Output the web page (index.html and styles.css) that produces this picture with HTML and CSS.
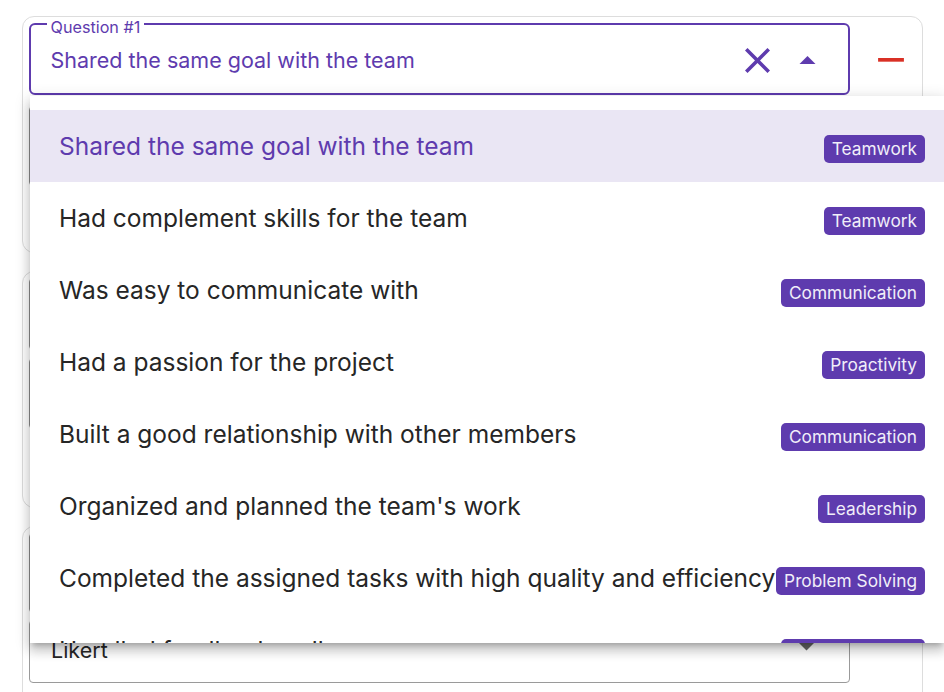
FILE: index.html
```html
<!DOCTYPE html>
<html lang="en">
<head>
<meta charset="utf-8">
<title>Questions</title>
<link rel="stylesheet" href="styles.css">
</head>
<body>
<div class="page">
  <div class="card">
    <div class="fields">
      <div class="qfield focused">
        <span class="qlabel">Question #1</span>
        <span class="qvalue">Shared the same goal with the team</span>
        <svg class="ico-close" viewBox="5 5 14 14" width="25" height="25"><path d="M19 6.41 17.59 5 12 10.59 6.41 5 5 6.41 10.59 12 5 17.59 6.41 19 12 13.41 17.59 19 19 17.59 13.41 12z"/></svg>
        <svg class="ico-arrow" viewBox="7 9 10 5" width="17" height="8.5"><path d="M7 14l5-5 5 5z"/></svg>
      </div>
      <div class="field f-c1b"></div>
    </div>
    <div class="actions">
      <svg class="ico-remove" viewBox="5 11 14 2" width="26" height="3.7"><path d="M19 13H5v-2h14v2z"/></svg>
    </div>
  </div>

  <div class="card">
    <div class="fields">
      <div class="field f-c2a"></div>
      <div class="field f-c2b"></div>
    </div>
    <div class="actions">
      <svg class="ico-remove" viewBox="5 11 14 2" width="26" height="3.7"><path d="M19 13H5v-2h14v2z"/></svg>
    </div>
  </div>

  <div class="card">
    <div class="fields">
      <div class="field f-c3a"></div>
      <div class="field select">
        <span class="svalue">Likert</span>
        <svg class="ico-down" viewBox="7 10 10 5" width="17" height="8.5"><path d="M7 10l5 5 5-5z"/></svg>
      </div>
    </div>
    <div class="actions">
      <svg class="ico-remove" viewBox="5 11 14 2" width="26" height="3.7"><path d="M19 13H5v-2h14v2z"/></svg>
    </div>
  </div>
</div>

<ul class="menu">
  <li class="item active"><span class="itext">Shared the same goal with the team</span><span class="chip">Teamwork</span></li>
  <li class="item"><span class="itext">Had complement skills for the team</span><span class="chip">Teamwork</span></li>
  <li class="item"><span class="itext">Was easy to communicate with</span><span class="chip">Communication</span></li>
  <li class="item"><span class="itext">Had a passion for the project</span><span class="chip">Proactivity</span></li>
  <li class="item"><span class="itext">Built a good relationship with other members</span><span class="chip">Communication</span></li>
  <li class="item"><span class="itext">Organized and planned the team's work</span><span class="chip">Leadership</span></li>
  <li class="item"><span class="itext">Completed the assigned tasks with high quality and efficiency</span><span class="chip">Problem Solving</span></li>
  <li class="item"><span class="itext">Handled feedback well</span><span class="chip">Communication</span></li>
</ul>
</body>
</html>
```
FILE: styles.css
```css
html, body {
  margin: 0;
  padding: 0;
  overflow: hidden;
  background: #ffffff;
}
body {
  position: relative;
  width: 944px;
  height: 692px;
  font-family: "Inter", "Noto Sans", sans-serif;
  color: #262626;
}
.page {
  display: flex;
  flex-direction: column;
  gap: 18px;
  padding: 16px 0 0 22px;
}
.card {
  box-sizing: border-box;
  width: 901px;
  height: 237px;
  flex-shrink: 0;
  border: 1px solid #dddddd;
  border-radius: 12px;
  padding: 6px;
  display: flex;
}
.fields {
  width: 821px;
  display: flex;
  flex-direction: column;
}
.actions {
  flex: 1;
  display: flex;
  justify-content: center;
  padding-left: 15px;
  padding-top: 35px;
}
.ico-remove {
  fill: #d93025;
  display: block;
}
.qfield {
  position: relative;
  box-sizing: border-box;
  height: 72px;
  border: 2.5px solid #5e3bae;
  border-radius: 6px;
  display: flex;
  align-items: center;
  padding: 2px 32px 0 19.5px;
}
.qlabel {
  position: absolute;
  top: -7.5px;
  left: 15.5px;
  padding: 0 4px;
  background: #ffffff;
  color: #5e3bae;
  font-size: 16.2px;
  line-height: 19px;
}
.qvalue {
  flex: 1;
  font-size: 21.5px;
  color: #5e3bae;
  white-space: nowrap;
}
.ico-close {
  fill: #5e3bae;
  margin-right: 29px;
  display: block;
}
.ico-arrow {
  fill: #5e3bae;
  display: block;
}
.field {
  box-sizing: border-box;
  border: 1px solid #8a8a8a;
  border-radius: 4px;
}
.f-c1b { margin-top: 11px; height: 80px; }
.f-c2a { height: 72px; }
.f-c2b { margin-top: 8px; height: 71px; }
.f-c3a { height: 80px; }
.select {
  margin-top: 7px;
  height: 63px;
  border-color: #9a9a9a;
  display: flex;
  align-items: center;
  padding: 0 34px 6px 21px;
}
.svalue {
  flex: 1;
  font-size: 21.5px;
  color: #262626;
  padding-top: 3px;
}
.ico-down {
  fill: #666666;
  display: block;
  margin-top: -4px;
}
.menu {
  position: absolute;
  top: 96px;
  left: 30px;
  width: 914px;
  height: 547px;
  margin: 0;
  padding: 14px 0 0 0;
  box-sizing: border-box;
  list-style: none;
  background: #ffffff;
  overflow: hidden;
  box-shadow: 0 5px 5px -3px rgba(0,0,0,0.2), 0 8px 10px 1px rgba(0,0,0,0.14), 0 3px 14px 2px rgba(0,0,0,0.12);
}
.item {
  height: 72px;
  display: flex;
  align-items: center;
  padding: 0 19px 0 29px;
}
.item.active {
  background: #eae6f4;
}
.itext {
  font-size: 24.5px;
  white-space: nowrap;
  color: #262626;
}
.item.active .itext {
  color: #5e3bae;
}
.chip {
  margin-left: auto;
  margin-top: 6px;
  flex-shrink: 0;
  height: 28px;
  line-height: 28px;
  padding: 0 8px;
  border-radius: 5px;
  background: #5e3bae;
  color: #f1eef9;
  font-size: 17.3px;
  white-space: nowrap;
}
```
